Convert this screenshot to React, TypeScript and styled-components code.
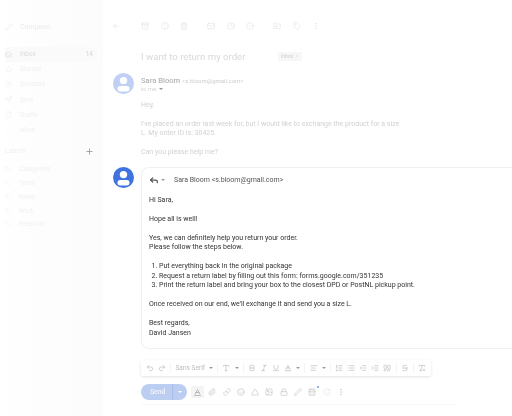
import styled, { createGlobalStyle } from "styled-components";
import {
    AlignLeft, Archive, ArrowLeft, Baseline, Bold, CalendarDays, ChevronDown, CircleAlert, CircleCheck,
    Clock, File, FolderInput, Image, IndentDecrease, IndentIncrease, Inbox, Italic, Link, List, ListOrdered,
    Lock, Mail, MoreVertical, Paperclip, Pen, Plus, Quote, Redo2, RemoveFormatting, Reply, Send, Smile, SmilePlus,
    Star, Strikethrough, Tag, Trash2, Triangle, Type, Underline, Undo2, X,
} from "lucide-react";

const GlobalStyle = createGlobalStyle`
    html, body { margin: 0; padding: 0; background: #fff; }
    body { font-family: Roboto, "Liberation Sans", sans-serif; }
`;

const navItems = [
    { icon: Inbox, name: "Inbox", count: "14", active: true },
    { icon: Star, name: "Starred" },
    { icon: Clock, name: "Snoozed" },
    { icon: Send, name: "Sent" },
    { icon: File, name: "Drafts" },
    { icon: ChevronDown, name: "More" },
];

const labels = ["Categories", "Team", "News", "Work", "Personal"];

const Person = ({ color }: { color: string }) => (
    <svg width="21" height="21" viewBox="0 0 21 21">
        <clipPath id={`clip${color.slice(1)}`}>
            <circle cx="10.5" cy="10.5" r="10.5" />
        </clipPath>
        <g clipPath={`url(#clip${color.slice(1)})`}>
            <rect width="21" height="21" fill={color} />
            <circle cx="10.5" cy="7.6" r="3.7" fill="#fff" />
            <rect x="4.5" y="13" width="12" height="5.4" rx="2.7" fill="#fff" />
        </g>
    </svg>
);

const App = () => (
    <Page>
        <GlobalStyle />
        <Sidebar>
            <ComposeRow>
                <Pen size={8} />
                <span>Compose</span>
            </ComposeRow>
            {navItems.map((item) => (
                <NavRow key={item.name} $active={item.active}>
                    <item.icon size={7} />
                    <NavName>{item.name}</NavName>
                    {item.count && <NavCount>{item.count}</NavCount>}
                </NavRow>
            ))}
            <LabelsHead>
                <span>Labels</span>
                <Plus size={9} color="#8d8d8d" />
            </LabelsHead>
            {labels.map((name) => (
                <LabelRow key={name}>
                    <Tag size={6} />
                    <span>{name}</span>
                </LabelRow>
            ))}
        </Sidebar>
        <Main>
            <TopBar>
                <BackSlot>
                    <ArrowLeft size={8} />
                </BackSlot>
                <IconGroup>
                    <Archive size={8} />
                    <CircleAlert size={8} />
                    <Trash2 size={8} />
                </IconGroup>
                <IconGroup>
                    <Mail size={8} />
                    <Clock size={8} />
                    <CircleCheck size={8} />
                </IconGroup>
                <IconGroup>
                    <FolderInput size={8} />
                    <Tag size={8} />
                    <MoreVertical size={8} />
                </IconGroup>
            </TopBar>
            <SubjectRow>
                <Subject>I want to return my order</Subject>
                <Chip>
                    Inbox <X size={4} />
                </Chip>
            </SubjectRow>
            <Message>
                <AvatarSlot $faded>
                    <Person color="#3f73e0" />
                </AvatarSlot>
                <MessageBody>
                    <Sender>
                        <strong>Sara Bloom</strong> <small>&lt;s.bloom@gmail.com&gt;</small>
                    </Sender>
                    <ToMe>
                        to me <Caret />
                    </ToMe>
                    <FadedText>
                        <p>Hey,</p>
                        <p>
                            I've placed an order last week for, but I would like to exchange the product for a size
                            <br />
                            L. My order ID is: 30425.
                        </p>
                        <p>Can you please help me?</p>
                    </FadedText>
                </MessageBody>
            </Message>
            <ReplyRow>
                <AvatarSlot>
                    <Person color="#3f73e0" />
                </AvatarSlot>
                <ReplyColumn>
                    <ReplyCard>
                        <ReplyHead>
                            <Reply size={10} strokeWidth={3} color="#555" />
                            <Caret />
                            <span>Sara Bloom &lt;s.bloom@gmail.com&gt;</span>
                        </ReplyHead>
                        <ReplyText>
                            <p>Hi Sara,</p>
                            <p>Hope all is well!</p>
                            <p>
                                Yes, we can definitely help you return your order.
                                <br />
                                Please follow the steps below.
                            </p>
                            <Steps>
                                <li>Put everything back in the original package</li>
                                <li>Request a return label by filling out this form: forms.google.com/351235</li>
                                <li>Print the return label and bring your box to the closest DPD or PostNL pickup point.</li>
                            </Steps>
                            <p>Once received on our end, we'll exchange it and send you a size L.</p>
                            <p>
                                Best regards,
                                <br />
                                David Jansen
                            </p>
                        </ReplyText>
                    </ReplyCard>
                    <FormatBar>
                        <Undo2 size={8} />
                        <Redo2 size={8} />
                        <Divider />
                        <FontName>Sans Serif</FontName>
                        <Caret />
                        <Divider />
                        <Type size={8} />
                        <Caret />
                        <Divider />
                        <Bold size={8} />
                        <Italic size={8} />
                        <Underline size={8} />
                        <Baseline size={8} />
                        <Caret />
                        <Divider />
                        <AlignLeft size={8} />
                        <Caret />
                        <Divider />
                        <ListOrdered size={8} />
                        <List size={8} />
                        <IndentDecrease size={8} />
                        <IndentIncrease size={8} />
                        <Quote size={8} />
                        <Divider />
                        <Strikethrough size={8} />
                        <Divider />
                        <RemoveFormatting size={8} />
                    </FormatBar>
                    <SendRow>
                        <SendButton>
                            <SendLabel>Send</SendLabel>
                            <SendCaret>
                                <Caret $light />
                            </SendCaret>
                        </SendButton>
                        <ColorSlot>
                            <Baseline size={9} />
                        </ColorSlot>
                        <Paperclip size={8} />
                        <Link size={8} />
                        <Smile size={8} />
                        <Triangle size={8} />
                        <Image size={8} />
                        <Lock size={8} />
                        <Pen size={8} />
                        <BadgedIcon>
                            <CalendarDays size={8} />
                            <BlueDot />
                        </BadgedIcon>
                        <PaleIcon>
                            <SmilePlus size={8} />
                        </PaleIcon>
                        <MoreVertical size={8} />
                    </SendRow>
                </ReplyColumn>
            </ReplyRow>
        </Main>
    </Page>
);

export default App;

const Page = styled.div`
    width: 512px;
    height: 416px;
    display: flex;
    overflow: hidden;
    background: #fff;
    filter: blur(0.4px);
`;

const Sidebar = styled.aside`
    width: 103px;
    flex-shrink: 0;
    box-sizing: border-box;
    padding: 20px 0 0 5px;
    background: linear-gradient(90deg, #fff 0, #fdfdfd 40%, #fcfcfc 100%);
    color: #f0f0f0;
    font-size: 6.5px;
`;

const ComposeRow = styled.div`
    height: 26.5px;
    display: flex;
    align-items: flex-start;
    gap: 7px;
    padding-top: 3px;
    box-sizing: border-box;
    font-size: 7px;
    color: #ebebeb;
`;

const NavRow = styled.div<{ $active?: boolean }>`
    height: 15.2px;
    width: 93px;
    display: flex;
    align-items: center;
    gap: 8px;
    box-sizing: border-box;
    padding-right: 5px;
    border-radius: 0 8px 8px 0;
    background: ${(p) => (p.$active ? "#fafafa" : "transparent")};
    color: ${(p) => (p.$active ? "#dcdcdc" : "#f0f0f0")};
`;

const NavName = styled.span`
    flex: 1;
`;

const NavCount = styled.span`
    color: #d4d4d4;
`;

const LabelsHead = styled.div`
    margin: 6px 0 4px;
    height: 15px;
    width: 89px;
    display: flex;
    align-items: center;
    justify-content: space-between;
    color: #f0f0f0;
    font-size: 7px;
`;

const LabelRow = styled.div`
    height: 13.7px;
    display: flex;
    align-items: center;
    gap: 8px;
    color: #f0f0f0;
`;

const Main = styled.main`
    flex: 1;
    min-width: 0;
    display: flex;
    flex-direction: column;
`;

const TopBar = styled.div`
    height: 8px;
    margin-top: 22px;
    display: flex;
    align-items: center;
    color: #e4e4e4;
`;

const BackSlot = styled.div`
    width: 38px;
    padding-left: 9px;
    box-sizing: border-box;
    display: flex;
`;

const IconGroup = styled.div`
    display: flex;
    gap: 11.5px;
    padding-right: 19px;
`;

const SubjectRow = styled.div`
    margin: 18px 0 0 38px;
    height: 16px;
    display: flex;
    align-items: center;
    gap: 32px;
`;

const Subject = styled.h1`
    margin: 0;
    width: 105px;
    white-space: nowrap;
    font-size: 9.6px;
    font-weight: 400;
    color: #d9d9d9;
`;

const Chip = styled.span`
    height: 9px;
    width: 24px;
    box-sizing: border-box;
    padding-left: 3px;
    display: inline-flex;
    align-items: center;
    gap: 2px;
    background: #f7f7f7;
    border-radius: 1px;
    font-size: 5px;
    color: #d0d0d0;
`;

const Message = styled.section`
    margin-top: 9px;
    display: flex;
    height: 94px;
    padding-left: 10px;
`;

const AvatarSlot = styled.div<{ $faded?: boolean }>`
    width: 28px;
    flex-shrink: 0;
    opacity: ${(p) => (p.$faded ? 0.33 : 1)};
`;

const MessageBody = styled.div`
    flex: 1;
    min-width: 0;
    padding-top: 2px;
`;

const Sender = styled.div`
    height: 9px;
    line-height: 11px;
    color: #c9c9c9;
    font-size: 7.6px;
    strong {
        font-weight: 500;
        color: #b5b5b5;
    }
    small {
        font-size: 6px;
        color: #cdcdcd;
    }
`;

const ToMe = styled.div`
    height: 9px;
    line-height: 9px;
    display: flex;
    align-items: center;
    gap: 3px;
    font-size: 6px;
    color: #d6d6d6;
`;

const Caret = styled.span<{ $light?: boolean }>`
    display: inline-block;
    width: 0;
    height: 0;
    border-left: 2px solid transparent;
    border-right: 2px solid transparent;
    border-top: 2px solid ${(p) => (p.$light ? "#fff" : "#9a9a9a")};
`;

const FadedText = styled.div`
    margin-top: 7.5px;
    font-size: 7px;
    line-height: 9.5px;
    color: #d2d2d2;
    white-space: nowrap;
    p {
        margin: 0 0 9.5px;
    }
`;

const ReplyRow = styled.section`
    display: flex;
    padding-left: 10px;
`;

const ReplyColumn = styled.div`
    flex: 1;
    min-width: 0;
`;

const ReplyCard = styled.div`
    height: 182px;
    box-sizing: border-box;
    padding: 7px 0 0 7px;
    margin-right: -8px;
    border: 1px solid #f0f0f0;
    border-right: 0;
    border-radius: 8px 0 0 8px;
`;

const ReplyHead = styled.div`
    height: 10px;
    display: flex;
    align-items: center;
    font-size: 7px;
    color: #555;
    svg {
        margin-right: 2px;
    }
    span:last-child {
        margin-left: 9px;
    }
`;

const ReplyText = styled.div`
    margin-top: 10.5px;
    font-size: 7px;
    line-height: 9.5px;
    color: #333;
    white-space: nowrap;
    p {
        margin: 0 0 9.5px;
    }
`;

const Steps = styled.ol`
    margin: 0 0 9.5px;
    padding-left: 10px;
`;

const FormatBar = styled.div`
    width: 290px;
    height: 16px;
    margin-top: 11px;
    box-sizing: border-box;
    padding: 0 5px;
    display: flex;
    align-items: center;
    justify-content: space-between;
    color: #bbbbbb;
    border-radius: 2px;
    box-shadow: 0 1px 3px rgba(0, 0, 0, 0.12);
`;

const Divider = styled.span`
    width: 1px;
    height: 10px;
    background: #f4f4f4;
`;

const FontName = styled.span`
    font-size: 6.6px;
    color: #bdbdbd;
`;

const SendRow = styled.div`
    width: 314px;
    height: 16px;
    margin-top: 8px;
    padding-bottom: 4px;
    display: flex;
    align-items: flex-start;
    gap: 6.3px;
    color: #c6c6c6;
    border-bottom: 1px solid #f8f8f8;
    > svg {
        margin-top: 4px;
    }
`;

const SendButton = styled.div`
    width: 46px;
    height: 16px;
    margin-right: -2.3px;
    flex-shrink: 0;
    display: flex;
    background: #bccdf2;
    border-radius: 8px;
    color: #f2f5fd;
    font-size: 6.8px;
    font-weight: 500;
`;

const SendLabel = styled.span`
    width: 32px;
    line-height: 16px;
    padding-left: 9px;
    box-sizing: border-box;
    border-right: 1px solid #a9bce8;
`;

const SendCaret = styled.span`
    flex: 1;
    display: flex;
    align-items: center;
    justify-content: center;
`;

const ColorSlot = styled.span`
    width: 13px;
    height: 12px;
    margin: 2px -2px 0 0;
    display: flex;
    align-items: center;
    justify-content: center;
    background: #f4f4f4;
    border-radius: 1px;
    color: #aaa;
`;

const BadgedIcon = styled.span`
    position: relative;
    display: flex;
    margin-top: 4px;
`;

const BlueDot = styled.span`
    position: absolute;
    top: -2px;
    right: -3px;
    width: 2px;
    height: 2px;
    border-radius: 50%;
    background: #6f97ea;
`;

const PaleIcon = styled.span`
    display: flex;
    margin-top: 4px;
    color: #e8e8e8;
`;
